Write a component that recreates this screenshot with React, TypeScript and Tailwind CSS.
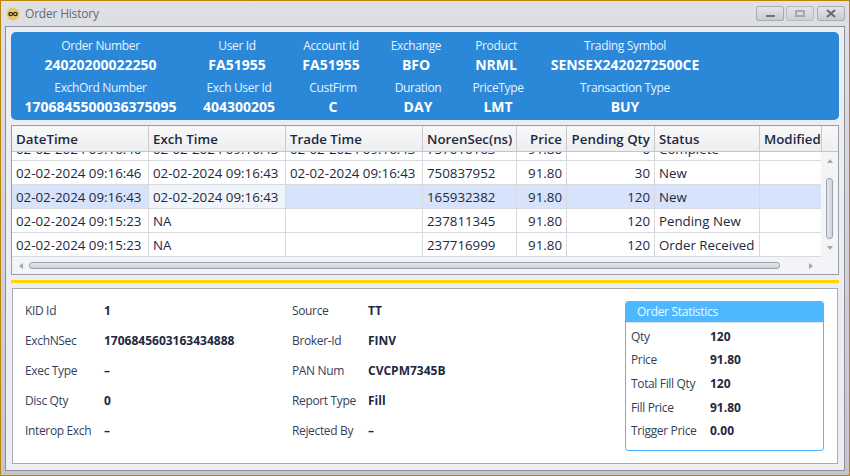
const columns = [
  { label: "DateTime", w: "w-[137px]" },
  { label: "Exch Time", w: "w-[137px]" },
  { label: "Trade Time", w: "w-[137px]" },
  { label: "NorenSec(ns)", w: "w-[94px]" },
  { label: "Price", w: "w-[50px]", right: true },
  { label: "Pending Qty", w: "w-[88px]", right: true },
  { label: "Status", w: "w-[105px]" },
  { label: "Modified", w: "w-[62px]" },
]

const rows = [
  ["02-02-2024 09:16:46", "02-02-2024 09:16:43", "02-02-2024 09:16:43", "750837952", "91.80", "30", "New", ""],
  ["02-02-2024 09:16:43", "02-02-2024 09:16:43", "", "165932382", "91.80", "120", "New", ""],
  ["02-02-2024 09:15:23", "NA", "", "237811345", "91.80", "120", "Pending New", ""],
  ["02-02-2024 09:15:23", "NA", "", "237716999", "91.80", "120", "Order Received", ""],
]

const clippedRow = ["02-02-2024 09:16:46", "02-02-2024 09:16:43", "02-02-2024 09:16:43", "757016163", "91.80", "0", "Complete", ""]

const headerTop = [
  { label: "Order Number", value: "24020200022250", w: "w-[179px]" },
  { label: "User Id", value: "FA51955", w: "w-[94px]" },
  { label: "Account Id", value: "FA51955", w: "w-[94px]" },
  { label: "Exchange", value: "BFO", w: "w-[76px]" },
  { label: "Product", value: "NRML", w: "w-[84px]" },
  { label: "Trading Symbol", value: "SENSEX2420272500CE", w: "w-[174px]" },
]

const headerBottom = [
  { label: "ExchOrd Number", value: "1706845500036375095", w: "w-[179px]" },
  { label: "Exch User Id", value: "404300205", w: "w-[98px]" },
  { label: "CustFirm", value: "C", w: "w-[90px]" },
  { label: "Duration", value: "DAY", w: "w-[80px]" },
  { label: "PriceType", value: "LMT", w: "w-[80px]" },
  { label: "Transaction Type", value: "BUY", w: "w-[174px]" },
]

const detailLeft = [
  ["KID Id", "1"],
  ["ExchNSec", "1706845603163434888"],
  ["Exec Type", "–"],
  ["Disc Qty", "0"],
  ["Interop Exch", "–"],
]

const detailRight = [
  ["Source", "TT"],
  ["Broker-Id", "FINV"],
  ["PAN Num", "CVCPM7345B"],
  ["Report Type", "Fill"],
  ["Rejected By", "–"],
]

const stats = [
  ["Qty", "120"],
  ["Price", "91.80"],
  ["Total Fill Qty", "120"],
  ["Fill Price", "91.80"],
  ["Trigger Price", "0.00"],
]

function HeaderRow({ items }: { items: typeof headerTop }) {
  return (
    <div className="flex">
      {items.map((item) => (
        <div key={item.label} className={`${item.w} flex flex-col items-center`}>
          <span className="h-[19px] text-[12px] leading-[19px] tracking-[-0.35px] text-[#e8f2fc]">{item.label}</span>
          <span className="h-[19px] text-[14px] leading-[19px] font-bold text-white">{item.value}</span>
        </div>
      ))}
    </div>
  )
}

function WindowButton({ children, className = "" }: { children: React.ReactNode; className?: string }) {
  return (
    <div
      className={`flex h-[15px] w-[28px] items-center justify-center rounded-[2px] border border-[#a9abb3] bg-gradient-to-b from-[#e4e5e9] to-[#c9cbd1] ${className}`}
    >
      {children}
    </div>
  )
}

function TableRow({ cells, selected }: { cells: string[]; selected?: boolean }) {
  return (
    <div className="flex h-[24px] border-b border-[#d9dae0]">
      {columns.map((col, i) => (
        <div
          key={col.label}
          className={`${col.w} flex shrink-0 items-center overflow-hidden whitespace-nowrap border-r border-[#d9dae0] px-[4px] pt-[2px] ${
            col.right ? "justify-end" : ""
          } ${selected ? (i === 1 ? "bg-[#f0f4fb]" : "bg-[#d7e3fb]") : "bg-white"}`}
        >
          {cells[i]}
        </div>
      ))}
    </div>
  )
}

export default function App() {
  return (
    <div
      className="flex h-[476px] w-[850px] flex-col overflow-hidden border border-[#b8860b] bg-gradient-to-b from-[#dfe0e4] to-[#c4c6cc] text-[#1d2840]"
      style={{ fontFamily: '"Open Sans", "Noto Sans", sans-serif' }}
    >
      {/* Title bar */}
      <div className="flex h-[25px] shrink-0 items-center pl-[5px] pr-[4px]">
        <svg width="14" height="14" viewBox="0 0 14 14" className="mr-[5px]">
          <circle cx="7" cy="7" r="6.5" fill="#ecc86c" />
          <path
            d="M7 7c-.8-1.2-1.5-1.7-2.4-1.7a1.7 1.7 0 0 0 0 3.4C5.5 8.7 6.2 8.2 7 7c.8-1.2 1.5-1.7 2.4-1.7a1.7 1.7 0 0 1 0 3.4C8.5 8.7 7.8 8.2 7 7z"
            fill="none"
            stroke="#2b2620"
            strokeWidth="1.3"
          />
        </svg>
        <span className="text-[12px] tracking-[-0.2px] text-[#626a7a]">Order History</span>
        <div className="ml-auto flex gap-[2px]">
          <WindowButton>
            <div className="mt-[5px] h-[2px] w-[9px] bg-[#70737c]" />
          </WindowButton>
          <WindowButton className="opacity-70">
            <div className="h-[7px] w-[10px] border-2 border-[#8e9199]" />
          </WindowButton>
          <WindowButton className="ml-[1px]">
            <svg width="10" height="9" viewBox="0 0 10 9">
              <path d="M1 1l8 7M9 1L1 8" stroke="#666a73" strokeWidth="2" />
            </svg>
          </WindowButton>
        </div>
      </div>

      {/* Content */}
      <div className="mx-[4px] mb-[4px] flex flex-1 flex-col border border-[#8f9095] bg-[#eceef3] px-[5px] pb-[6px] pt-[5px]">
        <div className="flex h-[88px] shrink-0 flex-col gap-[4px] rounded-[5px] bg-[#2b88d9] pt-[4px]">
          <HeaderRow items={headerTop} />
          <HeaderRow items={headerBottom} />
        </div>

        {/* Grid */}
        <div className="mt-[5px] flex h-[150px] shrink-0 flex-col border border-[#9a9ca6] bg-[#f3f4f6] text-[13.3px]">
          <div className="flex h-[26px] shrink-0 border-b border-[#c3c5cc] bg-gradient-to-b from-[#f8f8f9] to-[#eeeff1] font-semibold">
            {columns.map((col) => (
              <div
                key={col.label}
                className={`${col.w} flex shrink-0 items-center overflow-hidden whitespace-nowrap border-r border-[#c8cad0] px-[4px] pt-[2px] ${
                  col.right ? "justify-end" : ""
                }`}
              >
                {col.label}
              </div>
            ))}
          </div>
          <div className="flex min-h-0 flex-1">
            <div className="w-[809px] shrink-0 overflow-hidden bg-white">
              <div className="h-[9px] overflow-hidden">
                <div className="mt-[-15px]">
                  <TableRow cells={clippedRow} />
                </div>
              </div>
              {rows.map((row, i) => (
                <TableRow key={i} cells={row} selected={i === 1} />
              ))}
            </div>
            <div className="flex flex-1 flex-col items-center py-[7px]">
              <svg width="6" height="4" viewBox="0 0 6 4" className="shrink-0">
                <path d="M3 0l3 4H0z" fill="#a5a7ad" />
              </svg>
              <div className="mb-[7px] mt-[15px] w-[7px] flex-1 rounded-[3px] border border-[#9ea1b0] bg-gradient-to-r from-[#e5e7ee] to-[#cfd2dc]" />
              <svg width="6" height="4" viewBox="0 0 6 4" className="shrink-0">
                <path d="M3 4l3-4H0z" fill="#a5a7ad" />
              </svg>
            </div>
          </div>
          <div className="flex h-[17px] shrink-0 items-center pl-[7px] pr-[25px]">
            <svg width="4" height="6" viewBox="0 0 4 6">
              <path d="M0 3l4-3v6z" fill="#a5a7ad" />
            </svg>
            <div className="ml-[6px] h-[7px] w-[751px] rounded-[3px] border border-[#9ea1b0] bg-gradient-to-b from-[#e5e7ee] to-[#cfd2dc]" />
            <svg width="4" height="6" viewBox="0 0 4 6" className="ml-auto">
              <path d="M4 3L0 0v6z" fill="#a5a7ad" />
            </svg>
          </div>
        </div>

        <div className="mt-[5px] h-[3px] shrink-0 bg-[#ffd500]" />

        {/* Details */}
        <div className="mx-[1px] mt-[5px] flex flex-1 border border-[#a9abb5] bg-white pl-[12px] pr-[13px] pt-[7px] text-[12px]">
          <div className="w-[267px] shrink-0">
            {detailLeft.map(([label, value]) => (
              <div key={label} className="flex h-[30px] items-center">
                <span className="w-[79px] shrink-0 tracking-[-0.35px] text-[#333f59]">{label}</span>
                <span className="font-bold">{value}</span>
              </div>
            ))}
          </div>
          <div className="w-[333px] shrink-0">
            {detailRight.map(([label, value]) => (
              <div key={label} className="flex h-[30px] items-center">
                <span className="w-[76px] shrink-0 tracking-[-0.35px] text-[#333f59]">{label}</span>
                <span className="font-bold">{value}</span>
              </div>
            ))}
          </div>
          <div className="ml-auto mt-[5px] flex h-[150px] w-[200px] flex-col overflow-hidden rounded-[3px] border border-[#4db8ff]">
            <div className="flex h-[21px] shrink-0 items-center border-b border-[#d9e4ee] bg-[#4db8ff] pl-[11px] text-[12px] tracking-[-0.3px] text-[#f0f8ff]">
              Order Statistics
            </div>
            <div className="flex flex-col pt-[2px]">
              {stats.map(([label, value]) => (
                <div key={label} className="flex h-[23.6px] items-center pl-[5px]">
                  <span className="w-[79px] shrink-0 tracking-[-0.35px] text-[#333f59]">{label}</span>
                  <span className="font-bold">{value}</span>
                </div>
              ))}
            </div>
          </div>
        </div>
      </div>
    </div>
  )
}
